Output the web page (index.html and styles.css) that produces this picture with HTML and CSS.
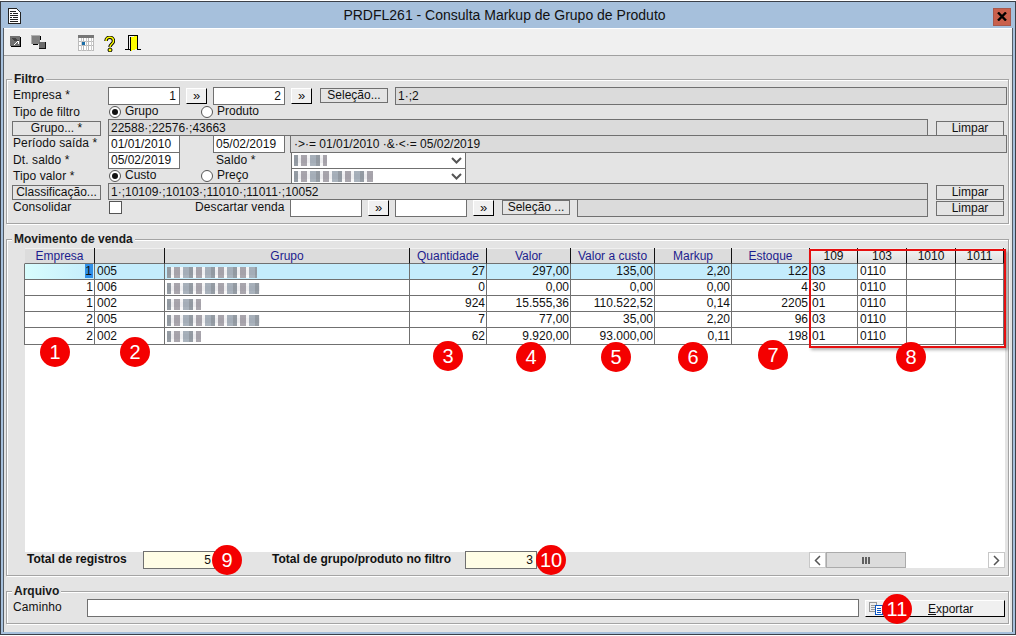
FILE: index.html
```html
<!DOCTYPE html>
<html lang="pt">
<head>
<meta charset="utf-8">
<title>PRDFL261</title>
<link rel="stylesheet" href="styles.css">
</head>
<body>
<div class="window">
  <header class="titlebar">
    <svg class="doc-icon" width="13" height="16" viewBox="0 0 13 16" shape-rendering="crispEdges"><path d="M.5.5h8l4 4v11H.5z" fill="#fff" stroke="#222"/><path d="M2 3h6M2 5h2M5 5h5M2 7h8M2 9h2M5 9h5M2 11h8M2 13h8" stroke="#222"/></svg>
    <h1 class="title">PRDFL261 - Consulta Markup de Grupo de Produto</h1>
    <button class="close"><svg width="10" height="9" viewBox="0 0 10 9"><path d="M1 .5l8 8M9 .5l-8 8" stroke="#000" stroke-width="2.4"/></svg></button>
  </header>
  <div class="client">
    <nav class="toolbar">
      <svg class="tb tb1" width="12" height="12" viewBox="0 0 12 12" shape-rendering="crispEdges"><path d="M0 0h10v10H0z" fill="#6f6f6f"/><path d="M10 1h1v10H1v-1h9z" fill="#000"/><path d="M2 2h4v1H2zM3 3h4v1H3zM4 4h5v1H4z" fill="#444"/><path d="M8 5h1v3H8zM7 5h1v1H7zM6 6h1v1H6zM5 7h1v1H5zM4 8h1v1H4z" fill="#fff"/></svg>
      <svg class="tb tb2" width="15" height="14" viewBox="0 0 15 14" shape-rendering="crispEdges"><path d="M0 0h9v9H0z" fill="#808080"/><path d="M0 0h9v1H1v8H0z" fill="#b0b0b0"/><path d="M9 1h1v4H9zM2 9h5v1H2z" fill="#000"/><path d="M8 7h6v6H8z" fill="#6a6a6a"/><path d="M14 7h1v7H8v-1h6z" fill="#111"/></svg>
      <svg class="tb tb3" width="16" height="16" viewBox="0 0 16 16" shape-rendering="crispEdges"><path d="M0 0h16v16H0z" fill="#fff"/><path d="M0 0h16v3H0z" fill="#777"/><path d="M0 3h1v13H0zM5 3h1v13H5zM10 3h1v13h-1zM15 3h1v13h-1zM3 3h0M0 6h16v1H0zM0 10h16v1H0zM0 15h16v1H0z" fill="#bbb"/><path d="M3 3h1v13H3zM8 3h1v13H8zM13 3h1v13h-1z" fill="#ccc"/><path d="M4 7h3v3H4z" fill="#1b6ea8"/></svg>
      <svg class="tb tb4" width="11" height="16" viewBox="0 0 11 16"><path d="M2 5c0-5 7.500-5 7.500 0 0 3-3.500 3-3.500 6" fill="none" stroke="#000" stroke-width="3.400"/><path d="M2 5c0-5 7.500-5 7.500 0 0 3-3.500 3-3.500 6" fill="none" stroke="#ff0" stroke-width="1.500"/><circle cx="6" cy="14" r="2" fill="#ff0" stroke="#000"/></svg>
      <svg class="tb tb5" width="16" height="16" viewBox="0 0 16 16" shape-rendering="crispEdges"><path d="M3 0h10v14h-1V1H4v13H3z" fill="#000"/><path d="M5 2l7-1v13l-7 2z" fill="#ff0"/><path d="M5 2h1v14H5zM0 14h5v1H0zM12 14h4v1h-4z" fill="#000"/></svg>
    </nav>
    <main class="body">
      <section class="group filtro">
        <h2 class="legend">Filtro</h2>
        <div class="row r17">
          <span class="label">Empresa *</span>
          <span class="input w72 num">1</span>
          <button class="go g6">»</button>
          <span class="input w72 num g6">2</span>
          <button class="go g6">»</button>
          <button class="flat sel g8">Seleção...</button>
          <span class="display grow g7">1·;2</span>
        </div>
        <div class="row r15">
          <span class="label">Tipo de filtro</span>
          <span class="opt w92"><i class="radio on"></i>Grupo</span>
          <span class="opt"><i class="radio"></i>Produto</span>
        </div>
        <div class="row r16">
          <button class="flat lead">Grupo... *</button>
          <span class="display w820">22588·;22576·;43663</span>
          <button class="flat clear">Limpar</button>
        </div>
        <div class="row r17">
          <span class="label">Período saída *</span>
          <span class="input w72">01/01/2010</span>
          <span class="input w72 g33">05/02/2019</span>
          <span class="display grow g5 small">·&gt;·= 01/01/2010 ·&amp;·&lt;·= 05/02/2019</span>
        </div>
        <div class="row r16">
          <span class="label">Dt. saldo *</span>
          <span class="input w72 tall">05/02/2019</span>
          <span class="label w75 g36">Saldo *</span>
          <span class="select"><i class="mosaic m-short"></i><svg class="chev" width="11" height="7" viewBox="0 0 11 7"><path d="M1 1l4.500 4.500L10 1" fill="none" stroke="#555" stroke-width="2"/></svg></span>
        </div>
        <div class="row r15">
          <span class="label">Tipo valor *</span>
          <span class="opt w92"><i class="radio on"></i>Custo</span>
          <span class="opt w91"><i class="radio"></i>Preço</span>
          <span class="select"><i class="mosaic m-long"></i><svg class="chev" width="11" height="7" viewBox="0 0 11 7"><path d="M1 1l4.500 4.500L10 1" fill="none" stroke="#555" stroke-width="2"/></svg></span>
        </div>
        <div class="row r16">
          <button class="flat lead">Classificação...</button>
          <span class="display w820">1·;10109·;10103·;11010·;11011·;10052</span>
          <button class="flat clear">Limpar</button>
        </div>
        <div class="row r18">
          <span class="label">Consolidar</span>
          <span class="check"></span>
          <span class="label w95 plain">Descartar venda</span>
          <span class="input w72">&nbsp;</span>
          <button class="go g6">»</button>
          <span class="input w72 g6">&nbsp;</span>
          <button class="go g6">»</button>
          <button class="flat sel g8">Seleção ...</button>
          <span class="display w351 g7">&nbsp;</span>
          <button class="flat clear">Limpar</button>
        </div>
      </section>

      <section class="group movimento">
        <h2 class="legend">Movimento de venda</h2>
        <div class="grid-area">
          <table class="grid">
            <thead>
              <tr>
                <th>Empresa</th><th>&nbsp;</th><th>Grupo</th><th>Quantidade</th><th>Valor</th><th>Valor a custo</th><th>Markup</th><th>Estoque</th>
                <th class="light">109</th><th class="light">103</th><th class="light">1010</th><th class="light">1011</th>
              </tr>
            </thead>
            <tbody>
              <tr class="current">
                <td class="n first"><span class="caret">1</span></td><td>005</td><td class="blur"><i class="mosaic m-90"></i></td><td class="n">27</td><td class="n">297,00</td><td class="n">135,00</td><td class="n">2,20</td><td class="n">122</td><td>03</td><td class="plain-cell">0110</td><td class="plain-cell"></td><td class="plain-cell"></td>
              </tr>
              <tr>
                <td class="n">1</td><td>006</td><td class="blur"><i class="mosaic m-93"></i></td><td class="n">0</td><td class="n">0,00</td><td class="n">0,00</td><td class="n">0,00</td><td class="n">4</td><td>30</td><td>0110</td><td></td><td></td>
              </tr>
              <tr>
                <td class="n">1</td><td>002</td><td class="blur"><i class="mosaic m-34"></i></td><td class="n">924</td><td class="n">15.555,36</td><td class="n">110.522,52</td><td class="n">0,14</td><td class="n">2205</td><td>01</td><td>0110</td><td></td><td></td>
              </tr>
              <tr>
                <td class="n">2</td><td>005</td><td class="blur"><i class="mosaic m-93"></i></td><td class="n">7</td><td class="n">77,00</td><td class="n">35,00</td><td class="n">2,20</td><td class="n">96</td><td>03</td><td>0110</td><td></td><td></td>
              </tr>
              <tr class="last">
                <td class="n">2</td><td>002</td><td class="blur"><i class="mosaic m-34"></i></td><td class="n">62</td><td class="n">9.920,00</td><td class="n">93.000,00</td><td class="n">0,11</td><td class="n">198</td><td>01</td><td>0110</td><td></td><td></td>
              </tr>
            </tbody>
          </table>
        </div>
        <div class="totals">
          <strong class="t1">Total de registros</strong>
          <span class="total">5</span>
          <strong class="t2">Total de grupo/produto no filtro</strong>
          <span class="total">3</span>
          <div class="hscroll">
            <span class="sb-btn"><svg width="7" height="11" viewBox="0 0 7 11"><path d="M6 1L1.500 5.500 6 10" fill="none" stroke="#555" stroke-width="1.500"/></svg></span>
            <span class="sb-thumb"><i></i><i></i><i></i></span>
            <span class="sb-track"></span>
            <span class="sb-btn"><svg width="7" height="11" viewBox="0 0 7 11"><path d="M1 1l4.500 4.500L1 10" fill="none" stroke="#555" stroke-width="1.500"/></svg></span>
          </div>
        </div>
      </section>

      <section class="group arquivo">
        <h2 class="legend">Arquivo</h2>
        <div class="file-row">
          <span class="label w74">Caminho</span>
          <span class="input path">&nbsp;</span>
          <button class="export">
            <svg class="exp-icon" width="14" height="13" viewBox="0 0 14 13" shape-rendering="crispEdges"><path d="M.5.5h7v9h-7z" fill="#eee" stroke="#999"/><path d="M2 3h4M2 5h4M2 7h4" stroke="#999"/><path d="M6.500 3.500h7v9h-7z" fill="#fff" stroke="#0b56c4" stroke-width="1"/><path d="M8 6h4M8 8h4M8 10h4" stroke="#0b56c4"/></svg>
            <span class="exp-label"><u>E</u>xportar</span>
          </button>
        </div>
      </section>
    </main>
  </div>

  <div class="highlight"></div>
  <span class="badge b1">1</span>
  <span class="badge b2">2</span>
  <span class="badge b3">3</span>
  <span class="badge b4">4</span>
  <span class="badge b5">5</span>
  <span class="badge b6">6</span>
  <span class="badge b7">7</span>
  <span class="badge b8">8</span>
  <span class="badge b9">9</span>
  <span class="badge b10">10</span>
  <span class="badge b11">11</span>
</div>
</body>
</html>
```
FILE: styles.css
```css
* { box-sizing: border-box; }
html, body { margin: 0; padding: 0; background: #fff; }
body { width: 1016px; height: 636px; overflow: hidden; font: 12px/15px "Liberation Sans", Arial, sans-serif; color: #111; }
button { font: inherit; color: inherit; padding: 0; margin: 0; }
i { font-style: normal; }

.window { position: relative; margin-top: 1px; width: 1016px; height: 634px; border: 1px solid #3b4048; background: #a6c0dc; padding: 0 2px 2px; display: flex; flex-direction: column; }

.titlebar { height: 26px; flex: none; display: flex; align-items: center; padding: 0 2px 0 5px; }
.doc-icon { flex: none; margin-top: 2px; }
.title { flex: 1; margin: 0; padding-right: 5px; text-align: center; font-size: 14px; font-weight: 400; color: #111; }
.close { width: 18px; height: 18px; flex: none; margin-top: 3px; background: #c9604c; border: 1px solid #a8584c; display: flex; align-items: center; justify-content: center; }

.client { flex: 1; display: flex; flex-direction: column; border-left: 1px solid #555d66; border-right: 1px solid #555d66; background: #e4e4e4; min-height: 0; }
.toolbar { height: 28px; flex: none; background: #f0f0f0; border-top: 1px solid #fff; border-bottom: 1px solid #a0a0a0; display: flex; align-items: flex-start; padding-left: 6px; }
.tb { flex: none; display: block; }
.tb1 { margin: 7px 0 0 0; }
.tb2 { margin: 6px 0 0 9px; }
.tb3 { margin: 6px 0 0 32px; }
.tb4 { margin: 7px 0 0 10px; }
.tb5 { margin: 6px 0 0 10px; }

.body { flex: 1; padding: 23px 3px 0 2px; display: flex; flex-direction: column; gap: 15px; min-height: 0; }

.group { position: relative; flex: none; border: 1px solid #a4a4a4; box-shadow: inset 1px 1px 0 #fff, 1px 1px 0 #fff; }
.legend { position: absolute; left: 5px; top: -8px; margin: 0; padding: 0 2px; background: #e4e4e4; font-size: 12px; line-height: 14px; font-weight: 700; color: #1a1a1a; }

.filtro { height: 145px; padding-top: 7px; }
.movimento { height: 337px; padding-top: 8px; }
.arquivo { height: 33px; padding-top: 7px; }

.row { display: flex; align-items: flex-start; padding: 0 1px 0 5px; }
.r15 { height: 15px; }
.r16 { height: 16px; }
.r17 { height: 17px; }
.r18 { height: 18px; }

.label { flex: none; width: 95px; margin-left: 1px; line-height: 16px; letter-spacing: .1px; white-space: nowrap; }
.row .label.w75 { width: 75px; margin-left: 36px; }
.row .label.plain { width: 95px; margin-left: 73px; }
.w74 { width: 74px; }

.input { flex: none; display: block; height: 18px; border: 1px solid #707070; background: #fff; padding: 0 2px; line-height: 16px; color: #111; }
.input.tall { height: 17px; line-height: 15px; }
.w72 { width: 72px; }
.num { text-align: right; padding-right: 3px; }
.g5 { margin-left: 5px; }
.g6 { margin-left: 6px; }
.g7 { margin-left: 7px; }
.g8 { margin-left: 8px; }
.g33 { margin-left: 33px; }

.go { flex: none; width: 21px; height: 16px; margin-top: 1px; background: #f0f0f0; border: 1px solid; border-color: #fff #000 #000 #fff; line-height: 12px; font-size: 13px; }
.flat { flex: none; height: 15px; margin-top: 1px; background: #e4e4e4; border: 1px solid #707070; line-height: 13px; text-align: center; }
.flat.sel { width: 68px; }
.flat.lead { width: 89px; margin-right: 7px; margin-top: 2px; }
.flat.clear { width: 68px; margin-left: 8px; margin-top: 2px; }
.display { display: block; height: 18px; border: 1px solid #707070; background: #dbdbdb; padding: 0 2px; line-height: 16px; white-space: nowrap; overflow: hidden; }
.grow { flex: 1; min-width: 0; }
.w820 { flex: none; width: 820px; height: 17px; }
.w351 { flex: none; width: 351px; }
.small { font-size: 12px; padding-left: 3px; }

.opt { flex: none; display: flex; align-items: center; height: 15px; white-space: nowrap; }
.w92 { width: 92px; }
.w91 { width: 91px; }
.radio { flex: none; position: relative; width: 12px; height: 12px; margin: 0 4px 0 1px; border: 1px solid #555; border-radius: 50%; background: #fff; }
.radio.on::after { content: ""; position: absolute; left: 2px; top: 2px; width: 6px; height: 6px; border-radius: 50%; background: #111; }
.check { flex: none; width: 13px; height: 13px; margin: 2px 0 0 1px; border: 1px solid #555; background: #fff; }

.select { flex: none; width: 175px; height: 17px; border: 1px solid #707070; background: #fff; display: flex; align-items: center; justify-content: space-between; padding: 0 3px 0 2px; }
.chev { flex: none; }

.mosaic { display: block; height: 11px; background-color: #e6e6ea;
  background-image:
    repeating-linear-gradient(90deg, rgba(110,120,130,.7) 0 4px, rgba(255,255,255,.25) 4px 7px, rgba(130,125,135,.65) 7px 13px, rgba(255,255,255,.35) 13px 16px, rgba(120,135,150,.6) 16px 22px),
    repeating-linear-gradient(0deg, rgba(255,255,255,.55) 0 3px, rgba(255,255,255,0) 3px 8px, rgba(255,255,255,.3) 8px 11px); }
.m-short { width: 33px; height: 11px; }
.m-long { width: 79px; height: 11px; margin-left: 0; }
.m-90 { width: 90px; }
.m-93 { width: 93px; }
.m-34 { width: 34px; }

.grid-area { margin-left: 18px; width: 980px; height: 304px; background: #fff; }
.grid { margin-left: -1px; table-layout: fixed; border-collapse: separate; border-spacing: 0; width: 980px; }
.grid th, .grid td { padding: 0; overflow: hidden; white-space: nowrap; }
.grid th { height: 16px; font-weight: 400; color: #1c1c8e; text-align: center; background: #dcdcdc; border-right: 1px solid #111; border-bottom: 1px solid #707070; line-height: 14px; box-shadow: inset 0 1px 0 #f0f0f0; }
.grid th.light { color: #111; background: linear-gradient(#f4f4f4, #dedede); }
.grid th:first-child { border-left: 1px solid #e4e4e4; }
.grid td { height: 16px; line-height: 15px; background: #fff; border-right: 1px solid #707070; border-bottom: 1px solid #707070; padding-left: 2px; }
.grid td:first-child { border-left: 1px solid #707070; }
.grid td.n { text-align: right; padding-right: 1px; padding-left: 0; }
.grid td.blur { padding-left: 2px; vertical-align: top; padding-top: 3px; }
.grid tr.last td { height: 17px; }
.grid tr.current td { background: #c4ecfc; }
.grid tr.current td.first { background: linear-gradient(90deg, #d8fdfd, #c4ecfc); }
.grid tr.current td.plain-cell { background: #fff; }
.caret { background: #2f8fe8; color: #111; padding: 0 1px 0 0; }

.grid th:nth-child(1) { width: 71px; }
.grid th:nth-child(2) { width: 70px; }
.grid th:nth-child(3) { width: 245px; }
.grid th:nth-child(4) { width: 77px; }
.grid th:nth-child(5) { width: 84px; }
.grid th:nth-child(6) { width: 84px; }
.grid th:nth-child(7) { width: 77px; }
.grid th:nth-child(8) { width: 78px; }
.grid th:nth-child(9) { width: 48px; }
.grid th:nth-child(10) { width: 49px; }
.grid th:nth-child(11) { width: 49px; }
.grid th:nth-child(12) { width: 48px; }

.totals { display: flex; align-items: flex-start; height: 23px; padding-left: 20px; }
.totals strong { flex: none; font-weight: 700; line-height: 14px; margin-top: 0; white-space: nowrap; }
.t1 { width: 116px; }
.t2 { width: 193px; margin-left: 57px; }
.total { flex: none; width: 72px; height: 18px; margin-top: -1px; border: 1px solid #707070; background: #fffde6; text-align: right; padding-right: 3px; line-height: 16px; }
.hscroll { flex: none; display: flex; width: 196px; height: 16px; margin-left: 272px; }
.sb-btn { flex: none; width: 17px; height: 16px; background: #fff; border: 1px solid #c8c8c8; display: flex; align-items: center; justify-content: center; }
.sb-thumb { flex: none; width: 80px; height: 16px; background: #dcdcdc; border: 1px solid #ababab; display: flex; align-items: center; justify-content: center; gap: 1px; }
.sb-thumb i { width: 2px; height: 7px; background: #606060; }
.sb-track { flex: 1; background: #fff; }

.file-row { display: flex; align-items: flex-start; padding-left: 6px; }
.file-row .label { margin-left: 0; width: 74px; }
.path { width: 772px; }
.export { flex: none; position: relative; width: 140px; height: 17px; margin: 1px 0 0 6px; background: #f0f0f0; border: 1px solid; border-color: #fff #000 #000 #fff; line-height: 14px; display: block; }
.exp-icon { position: absolute; left: 3px; top: 1px; }
.exp-label { position: absolute; left: 62px; right: 0; top: 1px; text-align: left; }

.highlight { position: absolute; left: 808px; top: 247px; width: 197px; height: 99px; border: 2px solid #e60f0f; box-shadow: 2px 2px 3px rgba(0,0,0,.3); pointer-events: none; }
.badge { position: absolute; width: 30px; height: 30px; margin: -15px 0 0 -15px; border-radius: 50%; background: #f40000; color: #fff; font-size: 20px; line-height: 30px; text-align: center; }
.b1 { left: 54px; top: 350px; }
.b2 { left: 134px; top: 350px; }
.b3 { left: 447px; top: 354px; }
.b4 { left: 530px; top: 355px; }
.b5 { left: 615px; top: 355px; }
.b6 { left: 692px; top: 355px; }
.b7 { left: 772px; top: 353px; }
.b8 { left: 910px; top: 355px; }
.b9 { left: 226px; top: 558px; }
.b10 { left: 550px; top: 558px; }
.b11 { left: 896px; top: 607px; }
```
